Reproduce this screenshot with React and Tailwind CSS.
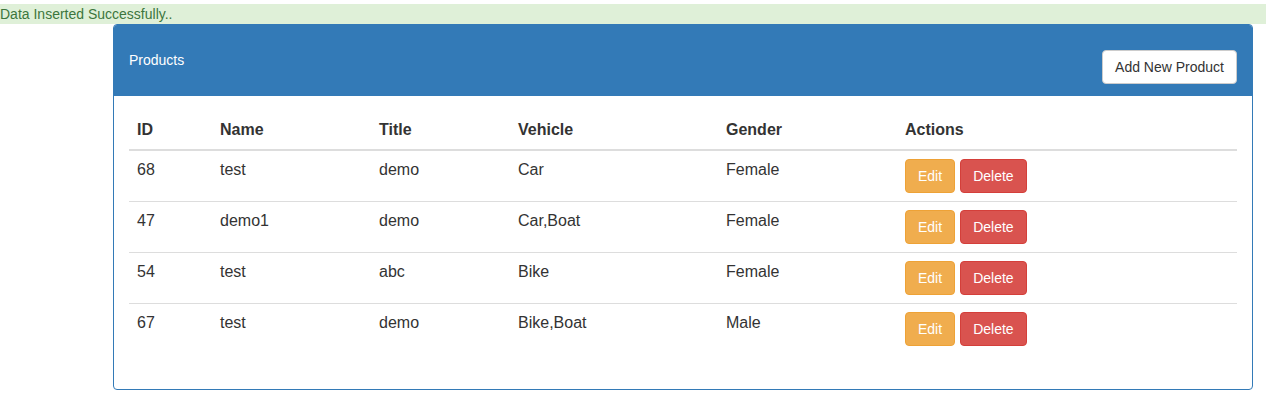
const rows = [
  { id: 68, name: 'test', title: 'demo', vehicle: 'Car', gender: 'Female' },
  { id: 47, name: 'demo1', title: 'demo', vehicle: 'Car,Boat', gender: 'Female' },
  { id: 54, name: 'test', title: 'abc', vehicle: 'Bike', gender: 'Female' },
  { id: 67, name: 'test', title: 'demo', vehicle: 'Bike,Boat', gender: 'Male' },
];

const App = () => {
  return (
    <div className="min-h-screen bg-white font-['Liberation_Sans',Arial,sans-serif] text-[14px] text-[#333]">
      {/* Alert */}
      <div className="mt-[4px] h-[20px] bg-[#dff0d8] leading-[20px] text-[#3c763d]">
        Data Inserted Successfully..
      </div>

      {/* Panel */}
      <div className="ml-[113px] w-[1140px] rounded-[4px] border border-[#337ab7]">
        <div className="flex h-[71px] items-start justify-between rounded-t-[3px] bg-[#337ab7] px-[15px]">
          <span className="mt-[25px] leading-[20px] text-white">Products</span>
          <button className="mt-[25px] h-[34px] rounded-[4px] border border-[#ccc] bg-white px-[12px] leading-[20px] text-[#333]">
            Add New Product
          </button>
        </div>

        <div className="p-[15px]">
          <table className="mb-[20px] w-full border-collapse text-[16px]">
            <thead>
              <tr className="border-b-2 border-[#ddd] text-left">
                <th className="w-[83px] p-[8px] font-bold leading-[22px]">ID</th>
                <th className="w-[159px] p-[8px] font-bold leading-[22px]">Name</th>
                <th className="w-[139px] p-[8px] font-bold leading-[22px]">Title</th>
                <th className="w-[208px] p-[8px] font-bold leading-[22px]">Vehicle</th>
                <th className="w-[179px] p-[8px] font-bold leading-[22px]">Gender</th>
                <th className="p-[8px] font-bold leading-[22px]">Actions</th>
              </tr>
            </thead>
            <tbody>
              {rows.map((r, i) => (
                <tr key={r.id} className={i > 0 ? 'border-t border-[#ddd]' : ''}>
                  <td className="p-[8px] align-top leading-[22px]">{r.id}</td>
                  <td className="p-[8px] align-top leading-[22px]">{r.name}</td>
                  <td className="p-[8px] align-top leading-[22px]">{r.title}</td>
                  <td className="p-[8px] align-top leading-[22px]">{r.vehicle}</td>
                  <td className="p-[8px] align-top leading-[22px]">{r.gender}</td>
                  <td className="p-[8px] align-top">
                    <div className="flex gap-[5px] text-[14px]">
                      <button className="h-[34px] rounded-[4px] border border-[#eea236] bg-[#f0ad4e] px-[12px] leading-[20px] text-white">
                        Edit
                      </button>
                      <button className="h-[34px] rounded-[4px] border border-[#d43f3a] bg-[#d9534f] px-[12px] leading-[20px] text-white">
                        Delete
                      </button>
                    </div>
                  </td>
                </tr>
              ))}
            </tbody>
          </table>
        </div>
      </div>
    </div>
  );
};

export default App;
